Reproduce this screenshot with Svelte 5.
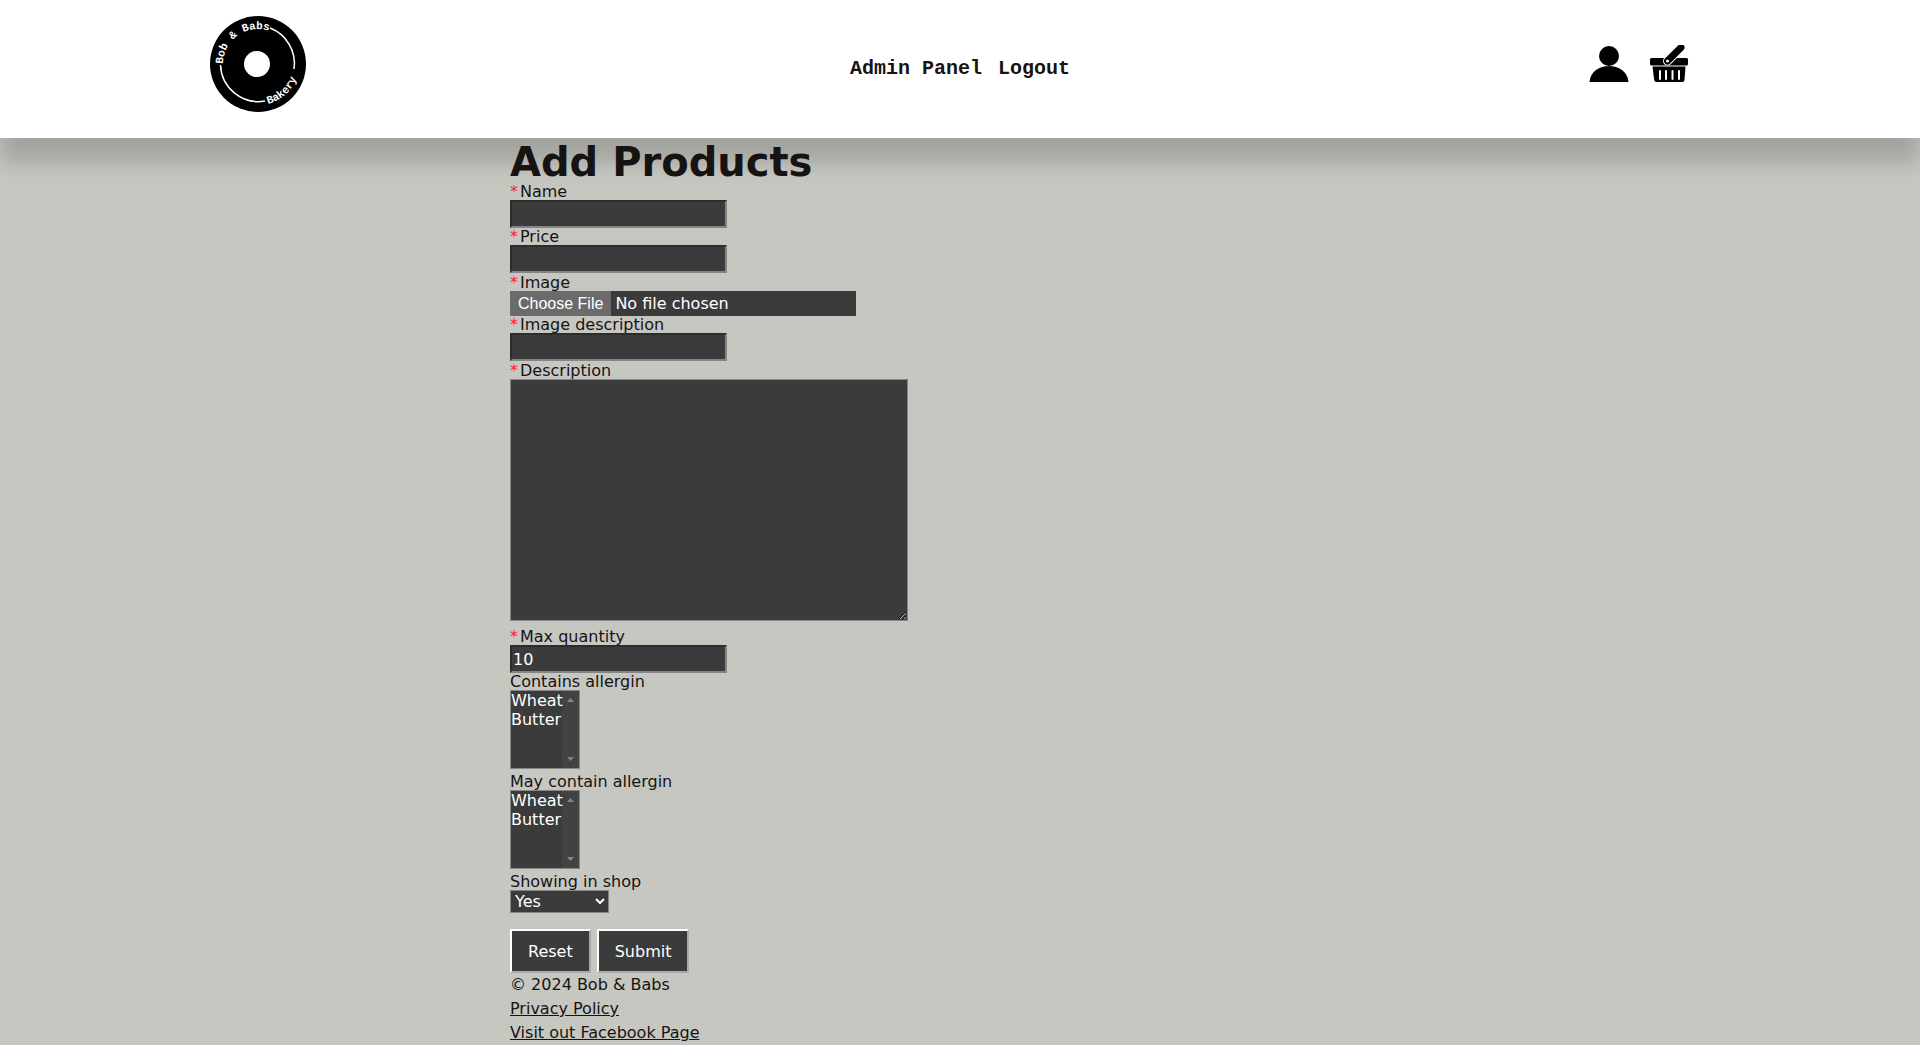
<script>
  const allergens = ['Wheat', 'Butter'];
</script>

<header>
  <a class="logo" href="/" aria-label="Bob &amp; Babs Bakery">
    <svg viewBox="0 0 96 96" width="96" height="96">
      <defs>
        <path id="arc-top" d="M13 48 A35 35 0 0 1 83 48" />
        <path id="arc-bottom" d="M48 89 A41 41 0 0 0 89 48" />
      </defs>
      <circle cx="48" cy="48" r="48" />
      <circle cx="47" cy="48" r="13" fill="#fff" />
      <path d="M60 12 A38 38 0 0 1 84 53" class="ring" />
      <path d="M10.500 49 A38 38 0 0 0 55 85" class="ring" />
      <text><textPath href="#arc-top">Bob &amp; Babs</textPath></text>
      <text><textPath href="#arc-bottom" startOffset="10">Bakery</textPath></text>
    </svg>
  </a>
  <nav>
    <a href="/admin">Admin Panel</a>
    <a href="/logout">Logout</a>
  </nav>
  <div class="icons">
    <a href="/account" aria-label="Account">
      <svg viewBox="0 0 40 40" width="40" height="40">
        <circle cx="20" cy="11" r="10" />
        <path d="M0.500 37 C2 15.500 38 15.500 39.500 37 Z" />
      </svg>
    </a>
    <a href="/basket" aria-label="Basket">
      <svg viewBox="0 0 40 40" width="40" height="40">
        <rect x="1" y="13" width="38" height="7.500" rx="1.500" />
        <path d="M3.500 21.500 H36.500 L35.500 35 Q35.200 37 33.500 37 H7.500 Q5.500 37 5.200 35 Z" />
        <path d="M11 26 V34 M17 26 V34 M23.500 26 V34 M30 26 V34" class="slots" />
        <path d="M18.500 16 L32 2.500" class="handle-edge" />
        <path d="M18.500 16 L32 2.500" class="handle" />
        <circle cx="18.500" cy="16" r="1.500" fill="#fff" />
      </svg>
    </a>
  </div>
</header>

<main>
  <h1>Add Products</h1>
  <form>
    <div class="field"><label for="name"><span>*</span>Name</label><input id="name" type="text" /></div>
    <div class="field"><label for="price"><span>*</span>Price</label><input id="price" type="text" /></div>
    <div class="field offset"><label for="image"><span>*</span>Image</label><input id="image" type="file" /></div>
    <div class="field"><label for="alt"><span>*</span>Image description</label><input id="alt" type="text" /></div>
    <div class="field offset"><label for="description"><span>*</span>Description</label><textarea id="description"></textarea></div>
    <div class="field spaced"><label for="max"><span>*</span>Max quantity</label><input id="max" type="text" inputmode="numeric" value="10" /></div>
    <div class="field">
      <label for="contains">Contains allergin</label>
      <select id="contains" class="list" multiple size="4">
        {#each allergens as a}<option>{a}</option>{/each}
      </select>
    </div>
    <div class="field after-list">
      <label for="may">May contain allergin</label>
      <select id="may" class="list" multiple size="4">
        {#each allergens as a}<option>{a}</option>{/each}
      </select>
    </div>
    <div class="field after-list">
      <label for="showing">Showing in shop</label>
      <select id="showing" class="drop"><option>Yes</option><option>No</option></select>
    </div>
    <div class="buttons">
      <button type="reset">Reset</button>
      <button type="submit">Submit</button>
    </div>
  </form>
  <footer>
    <p>© 2024 Bob &amp; Babs</p>
    <p><a href="/privacy">Privacy Policy</a></p>
    <p><a href="/facebook">Visit out Facebook Page</a></p>
  </footer>
</main>

<style>
  :global(body) {
    background: #c7c7c2;
    color: #161312;
    font: 16px/24px Verdana, "DejaVu Sans", sans-serif;
  }
  a { color: inherit; }
  header {
    display: grid;
    grid-template-columns: 1fr auto 1fr;
    align-items: start;
    height: 138px;
    padding: 0 210px;
    box-sizing: border-box;
    background: #fff;
    box-shadow: 0 25px 20px 0 #a4a59f;
  }
  svg { display: block; }
  .logo { justify-self: start; margin-top: 16px; }
  .logo text { fill: #fff; font: bold 11px "Courier New", "Liberation Mono", monospace; }
  .ring { fill: none; stroke: #fff; stroke-width: 1.5; }
  nav { display: flex; gap: 16px; margin-top: 57px; font: bold 20px/24px "Courier New", "Liberation Mono", monospace; }
  nav a { text-decoration: none; }
  .icons { display: flex; justify-content: flex-end; gap: 20px; margin: 45px 21px 0 0; }
  .slots { stroke: #fff; stroke-width: 2; stroke-linecap: round; }
  .handle-edge { stroke: #fff; stroke-width: 9; stroke-linecap: round; }
  .handle { stroke: #000; stroke-width: 7; stroke-linecap: round; }
  main { padding-left: 510px; }
  h1 { margin: 0; padding-top: 4px; font-size: 40px; line-height: 41px; }
  form, .field { display: flex; flex-direction: column; align-items: flex-start; }
  label { line-height: 17px; }
  label span { padding-right: 2px; color: #f22; }
  input, textarea, select, button {
    box-sizing: border-box;
    margin: 0;
    background: #3b3b3b;
    color: #fff;
    font: 16px Verdana, "DejaVu Sans", sans-serif;
    border-radius: 0;
  }
  input { width: 217px; height: 28px; padding: 1px; border: 2px solid; border-color: #2c2c2c #858585 #858585 #2c2c2c; }
  input[type="file"] { width: 346px; height: 25px; padding: 0; border: 0; }
  input::file-selector-button { height: 25px; margin: 0 4px 0 0; padding: 0 8px; border: 0; background: #6b6b6b; color: #fff; font: 16px "Liberation Sans", sans-serif; }
  textarea { width: 398px; height: 242px; border: 1px solid #858585; }
  .offset { padding-top: 1px; }
  .spaced { padding-top: 7px; }
  .list {
    width: 70px;
    height: 79px;
    padding: 0;
    border: 1px solid #858585;
    background:
      url("data:image/svg+xml,%3Csvg xmlns='http://www.w3.org/2000/svg' width='17' height='77'%3E%3Cpath d='M5 11L8.500 7L12 11ZM5 66L8.500 70L12 66Z' fill='%23858585'/%3E%3C/svg%3E") right top no-repeat,
      linear-gradient(#424242, #424242) right top / 17px 100% no-repeat,
      #3b3b3b;
  }
  .list option { min-height: 19px; padding: 0; line-height: 19px; }
  .after-list { padding-top: 4px; }
  .drop { width: 99px; height: 23px; border: 1px solid #858585; }
  .buttons { display: flex; gap: 6px; padding-top: 16px; }
  button { height: 44px; padding: 0 16px; border: 2px solid; border-color: #fff #a9a9a9 #a9a9a9 #fff; }
  p { margin: 0; }
</style>
